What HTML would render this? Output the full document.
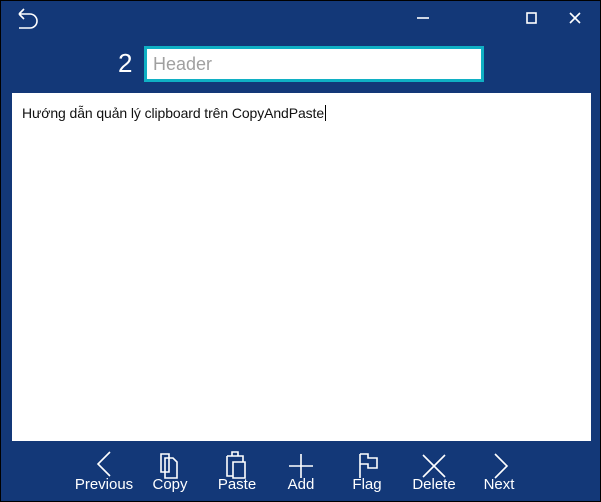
<!DOCTYPE html>
<html><head><style>
body{margin:0;width:601px;height:502px;overflow:hidden;font-family:"Liberation Sans",sans-serif}
.win{position:absolute;left:0;top:0;width:599px;height:500px;border:1px solid #000;background:#133878}
.ta{position:absolute;left:11px;top:92px;width:579px;height:348px;background:#fff}
.hdr{position:absolute;left:143px;top:45px;width:328px;height:30px;border:3px solid #10b0c4;background:#fff;color:#a0a0a0;font-size:18px;line-height:30px;padding-left:6px;box-sizing:content-box}
.num{position:absolute;left:117px;top:47px;color:#fff;font-size:26px}
.txt{position:absolute;left:21px;top:104px;font-size:14px;color:#111;letter-spacing:-0.1px}
.lbl{position:absolute;top:475px;color:#fff;font-size:15px;transform:translateX(-50%)}
svg{position:absolute;overflow:visible}
</style></head><body><div class="win">
<svg style="left:0;top:0" width="601" height="40" fill="none" stroke="#fff" stroke-width="1.6">
<path d="M18 13 L23 8 M18 13 L23 18 M18 13 H29 a6 6 0 0 1 0 14 H18"/>
<path d="M416 17 H428"/>
<rect x="526" y="12" width="9" height="10"/>
<path d="M569 12 L579 22 M579 12 L569 22"/>
</svg>
<div class="num">2</div>
<div class="hdr">Header</div>
<div class="ta"></div>
<div class="txt">Hướng dẫn quản lý clipboard trên CopyAndPaste<span style="border-left:1px solid #000;margin-left:1px"></span></div>
<svg style="left:0;top:445" width="601" height="35" fill="none" stroke="#fff" stroke-width="1.6">
<path d="M109 6 L97 18 L109 30"/>
<path d="M160 8 h8 v18 h-8 z M164 12 h8 l4 4 v16 h-12 z"/>
<path d="M231 10 v-4 h6 v4 M226 10 h16 v6 M226 10 v20 h6 M232 16 h12 v16 h-12 z"/>
<path d="M300 8 v24 M288 20 h24"/>
<path d="M359 8 v24 M359 8 h8 v4 h9 v10 h-9 v-4 h-8"/>
<path d="M422 9 L444 31 M444 9 L422 31"/>
<path d="M494 8 L506 20 L494 32"/>
</svg>
<div class="lbl" style="left:103px">Previous</div>
<div class="lbl" style="left:169px">Copy</div>
<div class="lbl" style="left:236px">Paste</div>
<div class="lbl" style="left:300px">Add</div>
<div class="lbl" style="left:366px">Flag</div>
<div class="lbl" style="left:433px">Delete</div>
<div class="lbl" style="left:498px">Next</div>
</div></body></html>
